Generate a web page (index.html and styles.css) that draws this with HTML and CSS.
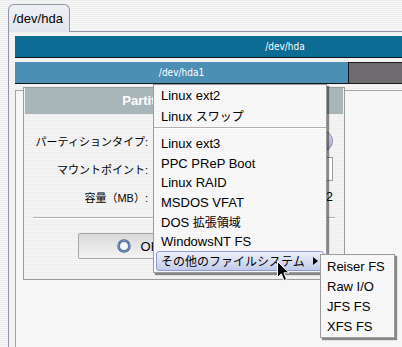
FILE: index.html
```html
<!DOCTYPE html>
<html lang="ja">
<head>
<meta charset="utf-8">
<title>/dev/hda</title>
<link rel="stylesheet" href="styles.css">
</head>
<body>
<div class="notebook">
  <div class="tabs"><div class="tab">/dev/hda</div></div>
  <div class="page">
    <div class="disk">/dev/hda</div>
    <div class="parts">
      <div class="part sel">/dev/hda1</div>
      <div class="part free"></div>
    </div>
    <div class="tree"></div>
  </div>
</div>

<div class="dialog">
  <div class="title">Partition の追加</div>
  <div class="form">
    <div class="label">パーティションタイプ:</div><div class="combo"></div>
    <div class="label">マウントポイント:</div><div class="entry"></div>
    <div class="label">容量（MB）:</div><div class="size">2</div>
  </div>
  <div class="sep"></div>
  <div class="buttons">
    <button class="btn"><svg class="okicon" width="14" height="14" viewBox="0 0 14 14"><circle cx="7" cy="7" r="5.5" fill="none" stroke="#3d5b8c" stroke-width="2.4"/><circle cx="7" cy="7" r="5.5" fill="none" stroke="#8fb0dc" stroke-width="0.8"/><circle cx="7" cy="7" r="3" fill="#f4f6fa"/></svg><span>OK</span></button>
  </div>
</div>

<div class="menu">
  <div class="item">Linux ext2</div>
  <div class="item">Linux <span class="ja">スワップ</span></div>
  <div class="msep"></div>
  <div class="item">Linux ext3</div>
  <div class="item">PPC PReP Boot</div>
  <div class="item">Linux RAID</div>
  <div class="item">MSDOS VFAT</div>
  <div class="item">DOS <span class="ja">拡張領域</span></div>
  <div class="item">WindowsNT FS</div>
  <div class="item hl"><span class="ja">その他のファイルシステム</span><svg class="arrow" width="5" height="8" viewBox="0 0 5 8"><path d="M0 0 L5 4 L0 8 Z" fill="#000"/></svg></div>
</div>

<div class="submenu">
  <div class="item">Reiser FS</div>
  <div class="item">Raw I/O</div>
  <div class="item">JFS FS</div>
  <div class="item">XFS FS</div>
</div>

<svg class="cursor" width="13" height="21" viewBox="0 0 13 21"><path d="M0.5 0.5 L0.5 16.5 L4.3 12.8 L7 19.5 L9.6 18.4 L6.9 11.8 L12 11.8 Z" fill="#000" stroke="#fff" stroke-width="1"/></svg>
</body>
</html>
```

FILE: styles.css
```css
html, body {
  margin: 0;
  height: 100%;
  overflow: hidden;
}
body {
  background: repeating-linear-gradient(to bottom, #eeeeee 0, #eeeeee 1px, #f6f6f6 1px, #f6f6f6 2px);
  font-family: "Liberation Sans", "Noto Sans CJK JP", sans-serif;
  font-size: 13px;
  color: #000;
  position: relative;
}
.tabs {
  display: flex;
  padding: 4px 0 0 8px;
}
.tab {
  position: relative;
  z-index: 1;
  width: 56px;
  height: 27px;
  margin-bottom: -1px;
  padding-left: 4px;
  line-height: 27px;
  border: 1px solid #8e95a6;
  border-bottom: none;
  border-radius: 6px 6px 0 0;
  background: linear-gradient(to bottom, #eef0f5, #e2e5ed);
}
.page {
  margin-left: 8px;
  border-top: 1px solid #8e95a6;
  border-left: 1px solid #8e95a6;
  padding: 4px 0 0 6px;
  height: 400px;
}
.disk {
  width: 540px;
  height: 21px;
  line-height: 21px;
  background: #0d6c93;
  border-bottom: 1px solid #101820;
  color: #fff;
  text-align: center;
  font-family: "DejaVu Sans Condensed", "DejaVu Sans", sans-serif;
  font-stretch: condensed;
  font-size: 10px;
}
.parts {
  display: flex;
  margin-top: 4px;
  height: 22px;
}
.part {
  box-sizing: border-box;
  height: 22px;
  flex-shrink: 0;
}
.sel {
  width: 334px;
  background: #4b8fb4;
  border-bottom: 1px solid #10161c;
  border-right: 1px solid #10161c;
  color: #fff;
  text-align: center;
  line-height: 21px;
  font-family: "DejaVu Sans Condensed", "DejaVu Sans", sans-serif;
  font-stretch: condensed;
  font-size: 10px;
}
.free {
  width: 220px;
  background: #6d6b70;
  border-top: 1px solid #1c1c1c;
  border-bottom: 1px solid #1c1c1c;
}
.tree {
  margin-top: 6px;
  width: 600px;
  height: 300px;
  background: #f6f6f6;
  border: 1px solid #a4a4a4;
}

.dialog {
  position: absolute;
  left: 23px;
  top: 87px;
  width: 318px;
  padding: 0 1px 20px;
  border: 1px solid #9a9a9a;
  background: repeating-linear-gradient(to bottom, #eeeeee 0, #eeeeee 1px, #f5f5f5 1px, #f5f5f5 2px);
}
.title {
  height: 26px;
  line-height: 26px;
  background: #a9b6b9;
  color: #fff;
  font-weight: bold;
  text-align: center;
  padding-right: 28px;
}
.form {
  display: grid;
  grid-template-columns: 115px 178px;
  grid-template-rows: 22px 24px 22px;
  column-gap: 7px;
  row-gap: 5px;
  margin-top: 16px;
  padding-left: 8px;
}
.label {
  align-self: center;
  text-align: right;
  font-size: 11px;
  white-space: nowrap;
}
.combo {
  border: 1px solid #8a8aae;
  border-radius: 3px 11px 11px 3px;
  background: linear-gradient(to bottom, #dcdcf0, #a9a9d0);
}
.entry {
  background: #fff;
  border: 1px solid #9c9c9c;
}
.size {
  text-align: right;
  line-height: 22px;
}
.sep {
  margin: 9px 8px 0 8px;
  height: 0;
  border-top: 1px solid #b2b2b2;
  border-bottom: 1px solid #ffffff;
}
.buttons {
  display: flex;
  margin-top: 14px;
  padding-left: 53px;
}
.btn {
  width: 120px;
  height: 26px;
  display: flex;
  align-items: center;
  justify-content: center;
  gap: 10px;
  padding: 0;
  border: 1px solid #a6a6a6;
  border-radius: 2px;
  background: linear-gradient(to bottom, #d9d9d9, #f4f4f4);
  font-family: "Liberation Sans", sans-serif;
  font-size: 13px;
  color: #000;
}
.okicon {
  display: block;
}

.menu {
  position: absolute;
  left: 153px;
  top: 84px;
  width: 172px;
  padding: 1px 0 0;
  border: 1px solid #9c9c9c;
  background: repeating-linear-gradient(to bottom, #f4f4f4 0, #f4f4f4 1px, #fafafa 1px, #fafafa 2px);
  box-shadow: 2px 2px 1px rgba(0, 0, 0, 0.45);
}
.item {
  height: 19.5px;
  line-height: 19.5px;
  padding-left: 7px;
  white-space: nowrap;
}
.ja {
  font-family: "Noto Sans CJK JP", sans-serif;
  font-size: 12px;
}
.msep {
  height: 7px;
  box-sizing: border-box;
  border-bottom: 3px solid transparent;
}
.msep::after {
  content: "";
  display: block;
  margin-top: 2px;
  border-top: 1px solid #b0b0b0;
  border-bottom: 1px solid #ffffff;
}
.hl {
  display: flex;
  align-items: center;
  justify-content: space-between;
  height: 17.5px;
  line-height: 17.5px;
  margin: 0 2px 1px;
  padding: 0 5px 0 4px;
  border: 1px solid #8e9bcb;
  border-radius: 3px;
  background: linear-gradient(to bottom, #eceff9, #c2cbea);
}
.arrow {
  display: block;
}
.submenu {
  position: absolute;
  left: 320px;
  top: 254px;
  width: 73px;
  padding: 2px 0 0;
  border: 1px solid #9c9c9c;
  background: repeating-linear-gradient(to bottom, #f4f4f4 0, #f4f4f4 1px, #fafafa 1px, #fafafa 2px);
  box-shadow: 2px 2px 1px rgba(0, 0, 0, 0.45);
}
.submenu .item {
  height: 20px;
  line-height: 20px;
  padding-left: 6px;
}
.cursor {
  position: absolute;
  left: 277px;
  top: 261px;
}
```
